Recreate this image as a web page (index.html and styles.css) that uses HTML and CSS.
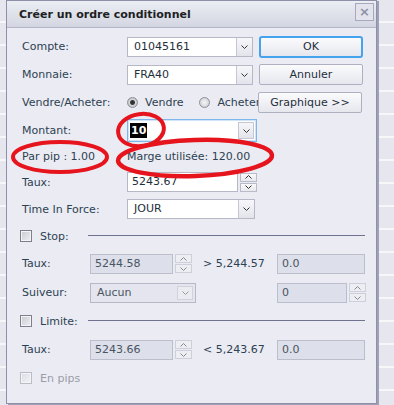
FILE: index.html
```html
<!DOCTYPE html>
<html lang="fr">
<head>
  <meta charset="UTF-8">
  <title>Créer un ordre conditionnel</title>
  <link rel="stylesheet" href="styles.css">
</head>
<body>
  <div class="dialog">
    <div class="titlebar">
      <span class="title">Créer un ordre conditionnel</span>
      <span class="close">&times;</span>
    </div>
    <div class="content">
      <!-- Top part -->
      <div class="row r1">
        <span class="lbl">Compte:</span>
        <div class="select s-main"><span class="val">01045161</span><span class="arrow"><svg width="7" height="4" viewBox="0 0 7 4"><polyline points="0.5,0.5 3.5,3.5 6.5,0.5" fill="none" stroke="#333" stroke-width="1"/></svg></span></div>
        <button class="btn ok">OK</button>
      </div>
      <div class="row r2">
        <span class="lbl">Monnaie:</span>
        <div class="select s-main"><span class="val">FRA40</span><span class="arrow"><svg width="7" height="4" viewBox="0 0 7 4"><polyline points="0.5,0.5 3.5,3.5 6.5,0.5" fill="none" stroke="#333" stroke-width="1"/></svg></span></div>
        <button class="btn">Annuler</button>
      </div>
      <div class="row r3">
        <span class="lbl">Vendre/Acheter:</span>
        <div class="radios">
          <span class="radio on"></span><span class="rtext">Vendre</span>
          <span class="radio"></span><span class="rtext">Acheter</span>
        </div>
        <button class="btn graph">Graphique &gt;&gt;</button>
      </div>
      <div class="row r4">
        <span class="lbl">Montant:</span>
        <div class="select s-focus"><span class="val"><span class="sel">10</span></span><span class="arrow"><svg width="7" height="4" viewBox="0 0 7 4"><polyline points="0.5,0.5 3.5,3.5 6.5,0.5" fill="none" stroke="#333" stroke-width="1"/></svg></span></div>
      </div>
      <div class="row r5">
        <span class="lbl">Par pip : 1.00</span>
        <span class="info">Marge utilisée: 120.00</span>
      </div>
      <div class="row r6">
        <span class="lbl">Taux:</span>
        <div class="input i-taux">5243.67</div>
        <div class="spin">
          <span class="sb"><svg width="7" height="4" viewBox="0 0 7 4"><polyline points="0.5,3.5 3.5,0.5 6.5,3.5" fill="none" stroke="#333" stroke-width="1"/></svg></span>
          <span class="sb"><svg width="7" height="4" viewBox="0 0 7 4"><polyline points="0.5,0.5 3.5,3.5 6.5,0.5" fill="none" stroke="#333" stroke-width="1"/></svg></span>
        </div>
      </div>
      <div class="row r7">
        <span class="lbl">Time In Force:</span>
        <div class="select s-tif"><span class="val">JOUR</span><span class="arrow"><svg width="7" height="4" viewBox="0 0 7 4"><polyline points="0.5,0.5 3.5,3.5 6.5,0.5" fill="none" stroke="#333" stroke-width="1"/></svg></span></div>
      </div>

      <!-- Stop -->
      <div class="row sect r8">
        <span class="check"></span><span class="ctext">Stop:</span>
        <span class="rule"></span>
      </div>
      <div class="row r9">
        <span class="lbl short">Taux:</span>
        <div class="input dis i-small">5244.58</div>
        <div class="spin dis">
          <span class="sb"><svg width="7" height="4" viewBox="0 0 7 4"><polyline points="0.5,3.5 3.5,0.5 6.5,3.5" fill="none" stroke="#888" stroke-width="1"/></svg></span>
          <span class="sb"><svg width="7" height="4" viewBox="0 0 7 4"><polyline points="0.5,0.5 3.5,3.5 6.5,0.5" fill="none" stroke="#888" stroke-width="1"/></svg></span>
        </div>
        <span class="limit">&gt; 5,244.57</span>
        <div class="input dis i-right">0.0</div>
      </div>
      <div class="row r10">
        <span class="lbl short">Suiveur:</span>
        <div class="select dis s-suiv"><span class="val">Aucun</span><span class="arrow"><svg width="7" height="4" viewBox="0 0 7 4"><polyline points="0.5,0.5 3.5,3.5 6.5,0.5" fill="none" stroke="#999" stroke-width="1"/></svg></span></div>
        <div class="input dis i-trail">0</div>
        <div class="spin dis">
          <span class="sb"><svg width="7" height="4" viewBox="0 0 7 4"><polyline points="0.5,3.5 3.5,0.5 6.5,3.5" fill="none" stroke="#888" stroke-width="1"/></svg></span>
          <span class="sb"><svg width="7" height="4" viewBox="0 0 7 4"><polyline points="0.5,0.5 3.5,3.5 6.5,0.5" fill="none" stroke="#888" stroke-width="1"/></svg></span>
        </div>
      </div>

      <!-- Limite -->
      <div class="row sect r11">
        <span class="check"></span><span class="ctext">Limite:</span>
        <span class="rule"></span>
      </div>
      <div class="row r12">
        <span class="lbl short">Taux:</span>
        <div class="input dis i-small">5243.66</div>
        <div class="spin dis">
          <span class="sb"><svg width="7" height="4" viewBox="0 0 7 4"><polyline points="0.5,3.5 3.5,0.5 6.5,3.5" fill="none" stroke="#888" stroke-width="1"/></svg></span>
          <span class="sb"><svg width="7" height="4" viewBox="0 0 7 4"><polyline points="0.5,0.5 3.5,3.5 6.5,0.5" fill="none" stroke="#888" stroke-width="1"/></svg></span>
        </div>
        <span class="limit">&lt; 5,243.67</span>
        <div class="input dis i-right">0.0</div>
      </div>
      <div class="row sect r13">
        <span class="check dis"></span><span class="ctext dis">En pips</span>
      </div>
    </div>
  </div>

  <!-- red annotation marks drawn over the screenshot -->
  <svg class="marks" width="394" height="405" viewBox="0 0 394 405">
    <ellipse cx="141" cy="130" rx="23" ry="16" transform="rotate(-8 141 130)" fill="none" stroke="#e6141d" stroke-width="4"/>
    <ellipse cx="60" cy="157" rx="47" ry="15" fill="none" stroke="#e6141d" stroke-width="4"/>
    <ellipse cx="195" cy="158" rx="77" ry="18" transform="rotate(-2 195 158)" fill="none" stroke="#e6141d" stroke-width="4.5"/>
  </svg>
</body>
</html>
```

FILE: styles.css
```css
/* Reset */
* {
  margin: 0;
  padding: 0;
  box-sizing: border-box;
}

body {
  font-family: "DejaVu Sans", Verdana, sans-serif;
  font-size: 11px;
  color: #2c4251;
  width: 394px;
  height: 405px;
  overflow: hidden;
  position: relative;
  background-color: #e6e7ee;
  background-image: repeating-linear-gradient(to bottom, #e6e7ee 0, #e6e7ee 21px, #f7f7fa 21px, #f7f7fa 23px);
}

/* Dialog window */
.dialog {
  margin-left: 6px;
  width: 371px;
  height: 404px;
  border: 1px solid #8d90a8;
  background-color: #ebebf3;
  box-shadow: 2px 1px 0 #9fa2b6;
  display: flex;
  flex-direction: column;
}

.titlebar {
  height: 27px;
  flex: none;
  display: flex;
  align-items: center;
  justify-content: space-between;
  padding: 0 2px 0 12px;
  background: linear-gradient(#eceef4, #d3d5e1);
  border-bottom: 1px solid #b3b6c8;
}

.title {
  font-weight: bold;
  color: #1d1f24;
  font-size: 11px;
}

.close {
  width: 19px;
  height: 18px;
  margin-top: -4px;
  border: 1px solid #a6a9bd;
  background: #e2e3ec;
  color: #8c90a4;
  font-weight: bold;
  font-size: 13px;
  line-height: 15px;
  text-align: center;
}

.content {
  padding: 8px 11px 0 15px;
  display: flex;
  flex-direction: column;
}

/* Rows */
.row {
  display: flex;
  align-items: center;
  height: 21px;
}
.r2, .r3, .r4 { margin-top: 7px; }
.r5 { margin-top: 5px; height: 20px; }
.r6 { margin-top: 6px; height: 20px; }
.r7 { margin-top: 7px; height: 20px; }
.r8 { margin-top: 9px; height: 16px; }
.r9 { margin-top: 9px; }
.r10 { margin-top: 8px; }
.r11 { margin-top: 10px; height: 16px; }
.r12 { margin-top: 10px; }
.r13 { margin-top: 10px; height: 16px; }

.lbl {
  width: 105px;
  flex: none;
  white-space: nowrap;
}
.lbl.short {
  width: 68px;
}

/* Select boxes */
.select {
  height: 20px;
  display: flex;
  background: #fff;
  border: 1px solid #b6b8c6;
  flex: none;
}
.select .val {
  flex: 1;
  padding-left: 6px;
  line-height: 18px;
  white-space: nowrap;
  color: #1f2f3a;
}
.select .arrow {
  width: 16px;
  border-left: 1px solid #c4c6d2;
  background: linear-gradient(#f7f7fa, #e3e4eb);
  display: flex;
  align-items: center;
  justify-content: center;
}
.s-main { width: 126px; }
.s-tif { width: 128px; }
.s-focus {
  width: 130px;
  height: 23px;
  border-color: #7eb6ea;
  box-shadow: inset 0 0 0 1px #cfe4f8;
}
.s-focus .val {
  line-height: 21px;
  padding-left: 2px;
}
.s-focus .arrow {
  margin: 2px 2px 2px 0;
  border: 1px solid #c4c6d2;
}
.sel {
  background: #000;
  color: #fff;
  font-weight: bold;
  padding: 1px 1px;
}
.select.dis {
  background: #e4e5ee;
}
.select.dis .val {
  color: #4a5560;
}
.select.dis .arrow {
  background: #ebecf2;
  margin: 2px;
  border: 1px solid #d0d2dc;
}
.s-suiv { width: 106px; }

/* Buttons */
.btn {
  margin-left: 6px;
  width: 104px;
  height: 21px;
  font-family: inherit;
  font-size: 11px;
  color: #1f2f3a;
  border: 1px solid #aeb0bf;
  border-radius: 2px;
  background: linear-gradient(#fbfbfd, #e6e7ee);
}
.btn.ok {
  height: 22px;
  border: 2px solid #45a2ec;
  border-radius: 3px;
}
.btn.graph {
  margin-left: 0;
}

/* Radio buttons */
.radios {
  width: 131px;
  flex: none;
  display: flex;
  align-items: center;
  overflow: hidden;
  white-space: nowrap;
}
.radio {
  width: 11px;
  height: 11px;
  flex: none;
  border-radius: 50%;
  border: 1px solid #8d8f98;
  background: radial-gradient(#f5f5f5, #c8c9cf);
  margin-right: 7px;
}
.radio.on {
  background: radial-gradient(#2a2a2a 0, #3a3a3a 2px, #d8d8dc 3px, #b9bac0 5px);
}
.rtext {
  margin-right: 16px;
}

.info {
  white-space: nowrap;
}

/* Text inputs */
.input {
  height: 20px;
  border: 1px solid #b6b8c6;
  background: #fff;
  padding-left: 4px;
  line-height: 18px;
  color: #1f2f3a;
  flex: none;
}
.i-taux {
  width: 111px;
}
.input.dis {
  background: #dddfea;
  border-color: #bcbecc;
  color: #4a5560;
}
.i-small { width: 83px; }
.i-right { width: 88px; margin-left: auto; }
.i-trail { width: 70px; margin-left: 81px; }

/* Spinners */
.spin {
  display: flex;
  flex-direction: column;
  gap: 1px;
  margin-left: 2px;
  flex: none;
}
.spin .sb {
  width: 17px;
  height: 9px;
  border: 1px solid #b9bbc8;
  background: linear-gradient(#fafafc, #e7e8ee);
  display: flex;
  align-items: center;
  justify-content: center;
}
.spin.dis .sb {
  background: #edeef3;
  border-color: #cdcfd9;
}

.limit {
  margin-left: 11px;
  white-space: nowrap;
}

/* Section headers with checkbox */
.check {
  width: 12px;
  height: 12px;
  margin-left: -2px;
  border: 1px solid #7d7f8a;
  background: linear-gradient(135deg, #c9cad2, #eeeef2);
  box-shadow: inset 0 0 0 1px #f4f4f7;
  flex: none;
}
.check.dis {
  border-color: #b9bbc6;
  background: linear-gradient(135deg, #dcdde4, #f2f2f6);
}
.ctext {
  margin-left: 8px;
  width: 48px;
}
.ctext.dis {
  color: #9a9ca6;
}
.rule {
  flex: 1;
  height: 1px;
  background: #6f7390;
  margin-top: -2px;
}

/* Annotation overlay */
.marks {
  position: absolute;
  top: 0;
  left: 0;
  pointer-events: none;
}
```
